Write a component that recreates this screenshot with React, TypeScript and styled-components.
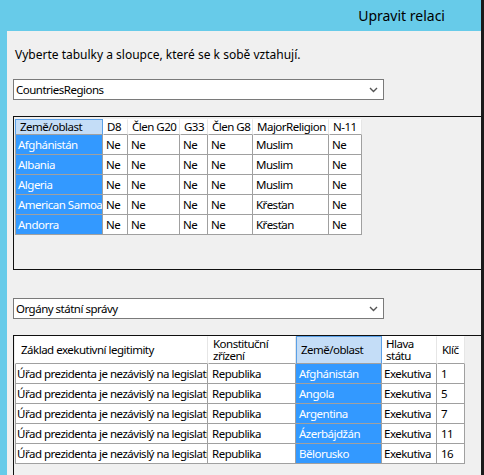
import React from 'react';
import styled, { createGlobalStyle } from 'styled-components';

const Global = createGlobalStyle`
	html, body {
		margin: 0;
		padding: 0;
		background: #f0f0f0;
	}
	body {
		font-family: "Noto Sans", "Open Sans", sans-serif;
		font-size: 12px;
		color: #000;
	}
`;

const Window = styled.div`
	width: 484px;
	height: 475px;
	box-sizing: border-box;
	display: flex;
	flex-direction: column;
	background: #67cbe9;
	border-right: 3px solid #1a1a1a;
	overflow: hidden;
`;

const TitleBar = styled.div`
	height: 31px;
	flex: none;
	display: flex;
	align-items: center;
	justify-content: flex-end;
	padding-right: 36px;
	font-size: 14px;
	color: #000;
`;

const Body = styled.div`
	flex: 1;
	margin-left: 7px;
	background: #f0f0f0;
	display: flex;
	flex-direction: column;
	padding-left: 6px;
	overflow: hidden;
`;

const Prompt = styled.div`
	margin: 16px 0 0 2px;
	line-height: 16px;
	height: 16px;
`;

const Combo = styled.div<{ $top: number }>`
	margin-top: ${p => p.$top}px;
	width: 371px;
	height: 21px;
	box-sizing: border-box;
	border: 1px solid #7a7a7a;
	background: #fff;
	display: flex;
	align-items: center;
	justify-content: space-between;
	padding: 0 5px 0 2px;
	font-size: 11.5px;
	letter-spacing: -0.5px;
	flex: none;
`;

const Chevron = () => (
	<svg width="9" height="6" viewBox="0 0 9 6">
		<path d="M1 1 L4.5 4.5 L8 1" fill="none" stroke="#555" strokeWidth="1.4" />
	</svg>
);

const Panel = styled.div<{ $top: number; $height: number; $pad: number }>`
	margin-top: ${p => p.$top}px;
	height: ${p => p.$height}px;
	box-sizing: border-box;
	border: 1px solid #101010;
	border-right: none;
	padding: ${p => p.$pad}px 0 0 1px;
	background: #f0f0f0;
	flex: none;
	font-size: 11.5px;
	letter-spacing: -0.5px;
	overflow: hidden;
`;

const Grid = styled.div`
	display: flex;
	flex-direction: column;
	width: max-content;
`;

const Row = styled.div<{ $cols: string }>`
	display: grid;
	grid-template-columns: ${p => p.$cols};
`;

const HeadCell = styled.div<{ $h: number; $sel?: boolean; $pl: number }>`
	height: ${p => p.$h}px;
	box-sizing: border-box;
	background: ${p => (p.$sel ? '#c4ddf7' : '#ffffff')};
	border: 1px solid ${p => (p.$sel ? '#5ba0e6' : '#ffffff')};
	border-right-color: ${p => (p.$sel ? '#5ba0e6' : '#e6e6e6')};
	border-bottom: 1px solid #a0a0a0;
	padding-left: ${p => p.$pl}px;
	display: flex;
	align-items: center;
	line-height: 12px;
	white-space: pre;
	overflow: hidden;
`;

const Cell = styled.div<{ $sel?: boolean; $pl: number; $first?: boolean }>`
	height: 20px;
	box-sizing: border-box;
	background: ${p => (p.$sel ? '#3399ff' : '#ffffff')};
	color: ${p => (p.$sel ? '#ffffff' : '#000000')};
	border-right: 1px solid #a0a0a0;
	border-bottom: 1px solid #a0a0a0;
	border-left: ${p => (p.$first ? '1px solid #a0a0a0' : 'none')};
	padding-left: ${p => p.$pl}px;
	display: flex;
	align-items: center;
	white-space: nowrap;
	overflow: hidden;
`;

const cols1 = '88px 25px 52px 28px 45px 76px 33px';
const head1 = ['Země/oblast', 'D8', 'Člen G20', 'G33', 'Člen G8', 'MajorReligion', 'N-11'];
const rows1 = [
	['Afghánistán', 'Ne', 'Ne', 'Ne', 'Ne', 'Muslim', 'Ne'],
	['Albania', 'Ne', 'Ne', 'Ne', 'Ne', 'Muslim', 'Ne'],
	['Algeria', 'Ne', 'Ne', 'Ne', 'Ne', 'Muslim', 'Ne'],
	['American Samoa', 'Ne', 'Ne', 'Ne', 'Ne', 'Křesťan', 'Ne'],
	['Andorra', 'Ne', 'Ne', 'Ne', 'Ne', 'Křesťan', 'Ne'],
];

const cols2 = '193px 88px 86px 55px 28px';
const head2 = ['Základ exekutivní legitimity', 'Konstituční\nzřízení', 'Země/oblast', 'Hlava\nstátu', 'Klíč'];
const headPad2 = [5, 4, 4, 3, 4];
const countries2 = [
	['Afghánistán', '1'],
	['Angola', '5'],
	['Argentina', '7'],
	['Ázerbájdžán', '11'],
	['Bělorusko', '16'],
];

export default function App() {
	return (
		<>
			<Global />
			<Window>
				<TitleBar>Upravit relaci</TitleBar>
				<Body>
					<Prompt>Vyberte tabulky a sloupce, které se k sobě vztahují.</Prompt>
					<Combo $top={16}>
						<span>CountriesRegions</span>
						<Chevron />
					</Combo>
					<Panel $top={16} $height={154} $pad={2}>
						<Grid>
							<Row $cols={cols1}>
								{head1.map((h, i) => (
									<HeadCell key={h} $h={16} $sel={i === 0} $pl={i === 0 ? 4 : 3}>
										{h}
									</HeadCell>
								))}
							</Row>
							{rows1.map(r => (
								<Row key={r[0]} $cols={cols1}>
									{r.map((c, i) => (
										<Cell key={i} $sel={i === 0} $first={i === 0} $pl={i === 0 ? 2 : 3}>
											{c}
										</Cell>
									))}
								</Row>
							))}
						</Grid>
					</Panel>
					<Combo $top={28}>
						<span>Orgány státní správy</span>
						<Chevron />
					</Combo>
					<Panel $top={16} $height={141} $pad={0}>
						<Grid>
							<Row $cols={cols2}>
								{head2.map((h, i) => (
									<HeadCell key={h} $h={28} $sel={i === 2} $pl={headPad2[i]}>
										{h}
									</HeadCell>
								))}
							</Row>
							{countries2.map(([country, key]) => (
								<Row key={country} $cols={cols2}>
									<Cell $first $pl={1}>Úřad prezidenta je nezávislý na legislativě</Cell>
									<Cell $pl={4}>Republika</Cell>
									<Cell $sel $pl={3}>{country}</Cell>
									<Cell $pl={2}>Exekutiva</Cell>
									<Cell $pl={4}>{key}</Cell>
								</Row>
							))}
						</Grid>
					</Panel>
				</Body>
			</Window>
		</>
	);
}
